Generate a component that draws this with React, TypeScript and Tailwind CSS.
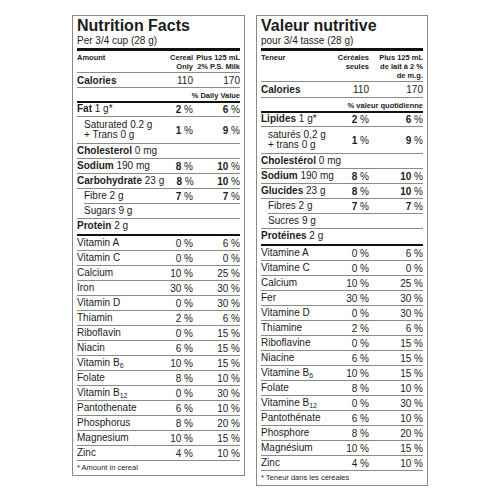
import React from 'react';

type Item = {
  b?: string;
  r?: React.ReactNode;
  a?: string;
  c?: string;
  strong?: boolean;
  indent?: boolean;
  cut?: boolean;
  last?: boolean;
  h: string;
};

type PanelProps = {
  title: string;
  serving: string;
  head: React.ReactNode;
  headH: string;
  calH: string;
  dv: string;
  c3: string;
  top: Item[];
  vitamins: [React.ReactNode, string, string][];
  note: string;
};

const Pct = ({ v, strong }: { v?: string; strong?: boolean }) =>
  v ? (
    <span>
      <span className={strong ? 'font-bold' : ''}>{v}</span> %
    </span>
  ) : null;

const Row = ({ item, c3 }: { item: Item; c3: string }) => (
  <div
    className={`flex items-center ${item.h} ${item.last ? '' : 'border-b border-[#8a8a8a]'} ${
      item.cut ? 'ml-[7px]' : item.indent ? 'pl-[7px]' : ''
    }`}
  >
    <div className="flex-1 whitespace-nowrap leading-[10.5px]">
      {item.b && <span className="font-bold">{item.b}</span>}
      {item.r}
    </div>
    <div className="w-[30px] text-right whitespace-nowrap">
      <Pct v={item.a} strong={item.strong} />
    </div>
    <div className={`${c3} text-right whitespace-nowrap`}>
      <Pct v={item.c} strong={item.strong} />
    </div>
  </div>
);

const Panel = (p: PanelProps) => (
  <div className="border border-[#8a8a8a] bg-white px-[4px] text-[10px] text-[#1c1c1c]">
    <div className="pt-[2px] text-[16px] leading-[16px] font-bold">{p.title}</div>
    <div className="mt-[1px] pb-[1px] leading-[12px]">{p.serving}</div>
    <div className="h-[3px] bg-[#111]" />
    <div className={`${p.headH} border-b border-[#8a8a8a] pt-[1.5px] text-[7.5px] leading-[9px] font-bold`}>{p.head}</div>
    <div className={`flex items-center ${p.calH} border-b border-[#8a8a8a]`}>
      <div className="flex-1 font-bold">Calories</div>
      <div className="w-[30px] text-right">110</div>
      <div className={`${p.c3} text-right`}>170</div>
    </div>
    <div className="flex h-[13px] items-center justify-end pt-[2px] text-[7.5px] font-bold">{p.dv}</div>
    <div className="h-[2px] bg-[#111]" />
    {p.top.map((item, i) => (
      <Row key={i} item={item} c3={p.c3} />
    ))}
    <div className="h-[2px] bg-[#111]" />
    {p.vitamins.map(([label, a, c], i) => (
      <Row key={i} item={{ r: label, a, c, h: 'h-[15px]' }} c3={p.c3} />
    ))}
    <div className="flex h-[14px] items-center text-[7.5px]">{p.note}</div>
  </div>
);

const B = ({ n }: { n: string }) => <sub className="text-[7px]">{n}</sub>;

const App = () => {
  const leftTop: Item[] = [
    { b: 'Fat', r: ' 1 g*', a: '2', c: '6', strong: true, h: 'h-[14px]' },
    { r: <>Saturated 0.2 g<br />+ Trans 0 g</>, a: '1', c: '9', strong: true, indent: true, h: 'h-[27px]' },
    { b: 'Cholesterol', r: ' 0 mg', h: 'h-[15px]' },
    { b: 'Sodium', r: ' 190 mg', a: '8', c: '10', strong: true, h: 'h-[15px]' },
    { b: 'Carbohydrate', r: ' 23 g', a: '8', c: '10', strong: true, h: 'h-[15px]' },
    { r: 'Fibre 2 g', a: '7', c: '7', strong: true, cut: true, h: 'h-[15px]' },
    { r: 'Sugars 9 g', indent: true, h: 'h-[15px]' },
    { b: 'Protein', r: ' 2 g', last: true, h: 'h-[15px]' },
  ];

  const rightTop: Item[] = [
    { b: 'Lipides', r: ' 1 g*', a: '2', c: '6', strong: true, h: 'h-[14px]' },
    { r: <>saturés 0,2 g<br />+ trans 0 g</>, a: '1', c: '9', strong: true, indent: true, h: 'h-[27px]' },
    { b: 'Cholestérol', r: ' 0 mg', h: 'h-[15px]' },
    { b: 'Sodium', r: ' 190 mg', a: '8', c: '10', strong: true, h: 'h-[15px]' },
    { b: 'Glucides', r: ' 23 g', a: '8', c: '10', strong: true, h: 'h-[15px]' },
    { r: 'Fibres 2 g', a: '7', c: '7', strong: true, cut: true, h: 'h-[15px]' },
    { r: 'Sucres 9 g', indent: true, h: 'h-[15px]' },
    { b: 'Protéines', r: ' 2 g', last: true, h: 'h-[15px]' },
  ];

  const leftVit: [React.ReactNode, string, string][] = [
    ['Vitamin A', '0', '6'],
    ['Vitamin C', '0', '0'],
    ['Calcium', '10', '25'],
    ['Iron', '30', '30'],
    ['Vitamin D', '0', '30'],
    ['Thiamin', '2', '6'],
    ['Riboflavin', '0', '15'],
    ['Niacin', '6', '15'],
    [<>Vitamin B<B n="6" /></>, '10', '15'],
    ['Folate', '8', '10'],
    [<>Vitamin B<B n="12" /></>, '0', '30'],
    ['Pantothenate', '6', '10'],
    ['Phosphorus', '8', '20'],
    ['Magnesium', '10', '15'],
    ['Zinc', '4', '10'],
  ];

  const rightVit: [React.ReactNode, string, string][] = [
    ['Vitamine A', '0', '6'],
    ['Vitamine C', '0', '0'],
    ['Calcium', '10', '25'],
    ['Fer', '30', '30'],
    ['Vitamine D', '0', '30'],
    ['Thiamine', '2', '6'],
    ['Riboflavine', '0', '15'],
    ['Niacine', '6', '15'],
    [<>Vitamine B<B n="6" /></>, '10', '15'],
    ['Folate', '8', '10'],
    [<>Vitamine B<B n="12" /></>, '0', '30'],
    ['Pantothénate', '6', '10'],
    ['Phosphore', '8', '20'],
    ['Magnésium', '10', '15'],
    ['Zinc', '4', '10'],
  ];

  return (
    <div className="flex h-[500px] w-[500px] items-start justify-center gap-[11px] bg-white pt-[15px] font-['Liberation_Sans',Arial,sans-serif]">
      <div className="w-[173px]">
        <Panel
          title="Nutrition Facts"
          serving="Per 3/4 cup (28 g)"
          headH="h-[22px]"
          calH="h-[15px]"
          c3="w-[47px]"
          dv="% Daily Value"
          head={
            <div className="flex">
              <div className="flex-1">Amount</div>
              <div className="w-[40px] text-right">Cereal<br />Only</div>
              <div className="w-[47px] text-right">Plus 125 mL<br />2% P.S. Milk</div>
            </div>
          }
          top={leftTop}
          vitamins={leftVit}
          note="* Amount in cereal"
        />
      </div>
      <div className="w-[172px]">
        <Panel
          title="Valeur nutritive"
          serving="pour 3/4 tasse (28 g)"
          headH="h-[31px]"
          calH="h-[16px]"
          c3="w-[54px]"
          dv="% valeur quotidienne"
          head={
            <div className="flex">
              <div className="flex-1">Teneur</div>
              <div className="w-[40px] text-right">Céréales<br />seules</div>
              <div className="w-[54px] text-right">Plus 125 mL<br />de lait à 2 %<br />de m.g.</div>
            </div>
          }
          top={rightTop}
          vitamins={rightVit}
          note="* Teneur dans les céréales"
        />
      </div>
    </div>
  );
};

export default App;
